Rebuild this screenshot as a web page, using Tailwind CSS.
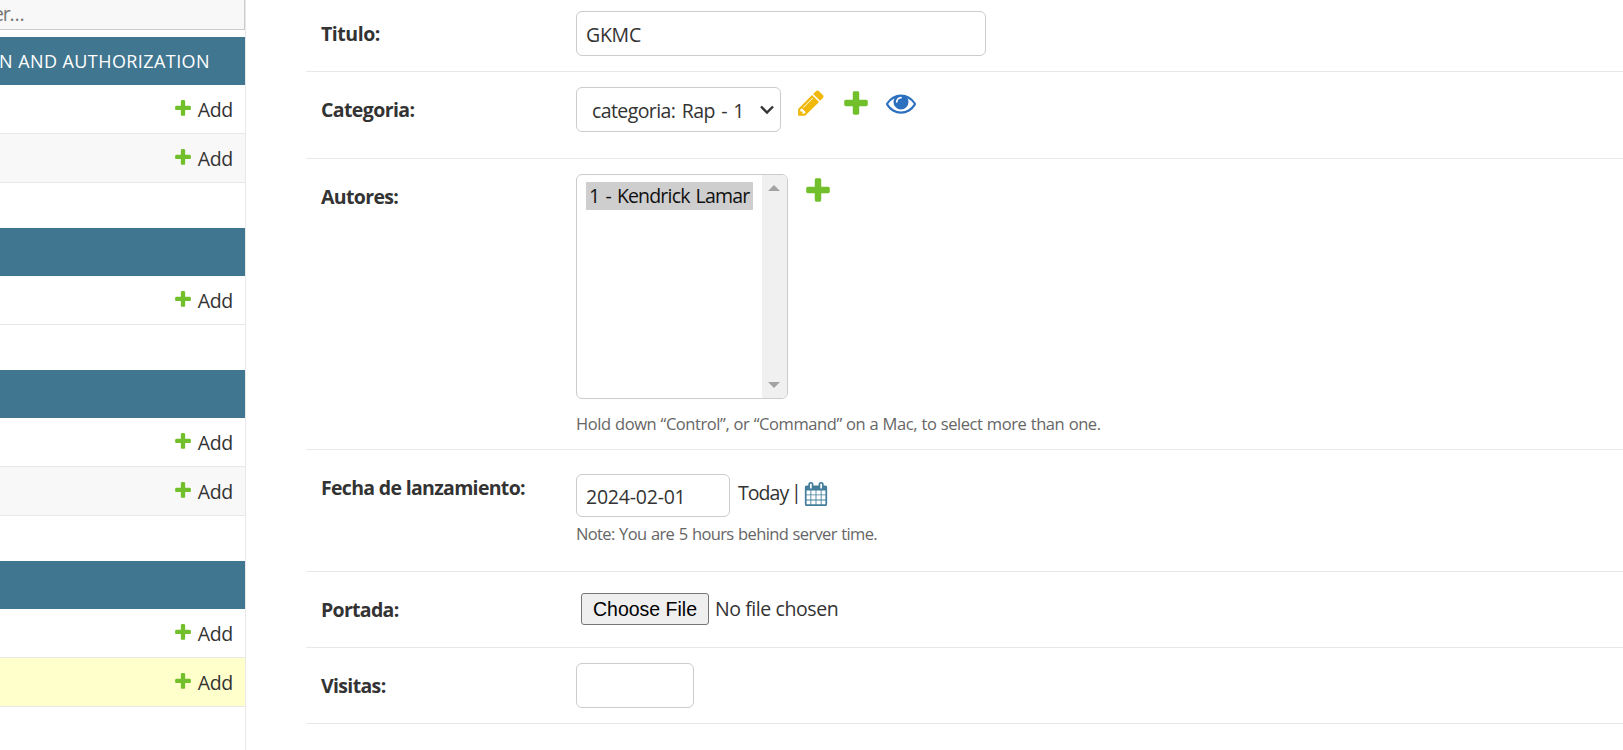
<!DOCTYPE html>
<html lang="es">
<head>
<meta charset="utf-8">
<title>Disco</title>
<script src="https://cdn.jsdelivr.net/npm/@tailwindcss/browser@4"></script>
</head>
<body class="h-[750px] overflow-hidden bg-white font-['Open_Sans',sans-serif] text-[19.5px] leading-[30px] text-[#333]">
<svg class="hidden">
  <symbol id="plus" viewBox="0 0 1792 1792"><path fill="#70bf2b" d="M1600 796v192q0 40-28 68t-68 28h-416v416q0 40-28 68t-68 28h-192q-40 0-68-28t-28-68v-416h-416q-40 0-68-28t-28-68v-192q0-40 28-68t68-28h416v-416q0-40 28-68t68-28h192q40 0 68 28t28 68v416h416q40 0 68 28t28 68z"/></symbol>
  <symbol id="pencil" viewBox="0 0 1792 1792"><path fill="#efb80b" d="M491 1536l91-91-235-235-91 91v107h128v128h107zm523-928q0-22-22-22-10 0-17 7l-542 542q-7 7-7 17 0 22 22 22 10 0 17-7l542-542q7-7 7-17zm-54-192l416 416-832 832h-416v-416zm683 96q0 53-37 90l-166 166-416-416 166-165q36-38 90-38 53 0 91 38l235 234q37 39 37 91z"/></symbol>
  <symbol id="eye" viewBox="0 0 1792 1792"><path fill="#2b70bf" d="M1664 960q-152-236-381-353 61 104 61 225 0 185-131.5 316.5t-316.5 131.5-316.5-131.5-131.5-316.5q0-121 61-225-229 117-381 353 133 205 333.5 326.5t434.5 121.5 434.5-121.5 333.5-326.5zm-720-384q0-20-14-34t-34-14q-125 0-214.5 89.5t-89.5 214.5q0 20 14 34t34 14 34-14 14-34q0-86 61-147t147-61q20 0 34-14t14-34zm848 384q0 34-20 69-140 230-376.5 368.5t-499.5 138.5-499.5-139-376.5-368q-20-35-20-69t20-69q140-229 376.5-368t499.5-139 499.5 139 376.5 368q20 35 20 69z"/></symbol>
  <symbol id="calendar" viewBox="0 0 1792 1792"><path fill="#447e9b" d="M192 1664h288v-288h-288v288zm352 0h320v-288h-320v288zm-352-352h288v-320h-288v320zm352 0h320v-320h-320v320zm-352-384h288v-288h-288v288zm736 736h320v-288h-320v288zm-384-736h320v-288h-320v288zm768 736h288v-288h-288v288zm-384-352h320v-320h-320v320zm-352-864v-288q0-13-9.5-22.5t-22.5-9.5h-64q-13 0-22.5 9.5t-9.5 22.5v288q0 13 9.5 22.5t22.5 9.5h64q13 0 22.5-9.5t9.5-22.5zm736 864h288v-320h-288v320zm-384-384h320v-288h-320v288zm384 0h288v-288h-288v288zm32-480v-288q0-13-9.5-22.5t-22.5-9.5h-64q-13 0-22.5 9.5t-9.5 22.5v288q0 13 9.5 22.5t22.5 9.5h64q13 0 22.5-9.5t9.5-22.5zm384-64v1280q0 52-38 90t-90 38h-1408q-52 0-90-38t-38-90v-1280q0-52 38-90t90-38h128v-96q0-66 47-113t113-47h64q66 0 113 47t47 113v96h384v-96q0-66 47-113t113-47h64q66 0 113 47t47 113v96h128q52 0 90 38t38 90z"/></symbol>
</svg>
<div class="flex h-full">
  <nav class="flex w-[246px] shrink-0 flex-col border-r border-[#e8e8e8]">
    <div class="h-[30px] overflow-hidden border-r border-b border-[#ccc] bg-[#f8f8f8] text-[#757575]"><div class="-ml-[7px] -mt-px tracking-[-1.2px]">er…</div></div>
    <div class="mt-[7px] flex h-12 items-center justify-end overflow-hidden whitespace-nowrap bg-[#417690] pr-[35px] text-[18px] tracking-[0.42px] text-white">AUTHENTICATION AND AUTHORIZATION</div>
    <div class="flex h-[49px] justify-end border-b border-[#e8e8e8] pr-[12px] pt-[10px]"><svg class="mr-[5px] mt-[3px] size-5"><use href="#plus"/></svg><a class="tracking-[-0.3px]">Add</a></div>
    <div class="flex h-[49px] justify-end border-b border-[#e8e8e8] bg-[#f8f8f8] pr-[12px] pt-[10px]"><svg class="mr-[5px] mt-[3px] size-5"><use href="#plus"/></svg><a class="tracking-[-0.3px]">Add</a></div>
    <div class="mt-[45px] h-12 bg-[#417690]"></div>
    <div class="flex h-[49px] justify-end border-b border-[#e8e8e8] pr-[12px] pt-[10px]"><svg class="mr-[5px] mt-[3px] size-5"><use href="#plus"/></svg><a class="tracking-[-0.3px]">Add</a></div>
    <div class="mt-[45px] h-12 bg-[#417690]"></div>
    <div class="flex h-[49px] justify-end border-b border-[#e8e8e8] pr-[12px] pt-[10px]"><svg class="mr-[5px] mt-[3px] size-5"><use href="#plus"/></svg><a class="tracking-[-0.3px]">Add</a></div>
    <div class="flex h-[49px] justify-end border-b border-[#e8e8e8] bg-[#f8f8f8] pr-[12px] pt-[10px]"><svg class="mr-[5px] mt-[3px] size-5"><use href="#plus"/></svg><a class="tracking-[-0.3px]">Add</a></div>
    <div class="mt-[45px] h-12 bg-[#417690]"></div>
    <div class="flex h-[49px] justify-end border-b border-[#e8e8e8] pr-[12px] pt-[10px]"><svg class="mr-[5px] mt-[3px] size-5"><use href="#plus"/></svg><a class="tracking-[-0.3px]">Add</a></div>
    <div class="flex h-[49px] justify-end border-b border-[#e8e8e8] bg-[#ffffcc] pr-[12px] pt-[10px]"><svg class="mr-[5px] mt-[3px] size-5"><use href="#plus"/></svg><a class="tracking-[-0.3px]">Add</a></div>
  </nav>
  <main class="ml-[60px] flex-1">
    <div class="flex h-[72px] border-b border-[#e8e8e8] pl-[15px]">
      <label class="w-[255px] pt-[19px] font-bold tracking-[-0.45px]">Titulo:</label>
      <div class="mt-[11px] h-[45px] w-[410px] rounded-md border border-[#ccc] pl-[9px] pt-[8px] tracking-[-0.25px]">GKMC</div>
    </div>
    <div class="flex h-[87px] border-b border-[#e8e8e8] pl-[15px]">
      <label class="w-[255px] pt-[23px] font-bold tracking-[-0.6px]">Categoria:</label>
      <div class="mt-[15px] flex h-[45px] w-[205px] rounded-md border border-[#ccc] pl-[15px] pt-[8px]">
        <span class="w-[168px] whitespace-nowrap tracking-[-0.6px] [word-spacing:2px]">categoria: Rap - 1</span>
        <svg class="mt-[9px] h-[10px] w-[14px] shrink-0" viewBox="0 0 14 10"><path d="M1 1.5l6 6 6-6" fill="none" stroke="#333" stroke-width="2.4"/></svg>
      </div>
      <div class="flex gap-[15px] pl-[15px] pt-4">
        <svg class="size-[30px]"><use href="#pencil"/></svg><svg class="size-[30px]"><use href="#plus"/></svg><svg class="size-[30px]"><use href="#eye"/></svg>
      </div>
    </div>
    <div class="flex h-[291px] border-b border-[#e8e8e8] pl-[15px]">
      <label class="w-[255px] pt-[23px] font-bold tracking-[-0.65px]">Autores:</label>
      <div class="pt-[15px]">
        <div class="flex">
          <div class="flex h-[225px] w-[212px] justify-between overflow-hidden rounded-md border border-[#ccc] pl-[9px]">
            <div class="mt-[7px] h-7 w-[167px] whitespace-nowrap bg-[#cecece] pl-[3px] leading-[28px] tracking-[-0.82px] text-[#101010] [word-spacing:1.8px]">1 - Kendrick Lamar</div>
            <div class="flex w-[25px] flex-col items-center justify-between bg-[#f0f0f0] pb-[10px] pt-[10px] pr-px">
              <svg class="h-[6px] w-[12px]" viewBox="0 0 12 6"><path d="M0 6l6-6 6 6z" fill="#a3a3a3"/></svg>
              <svg class="h-[6px] w-[12px]" viewBox="0 0 12 6"><path d="M0 0l6 6 6-6z" fill="#a3a3a3"/></svg>
            </div>
          </div>
          <svg class="ml-[15px] mt-px size-[30px]"><use href="#plus"/></svg>
        </div>
        <div class="mt-[10px] whitespace-nowrap text-[16.5px] tracking-[-0.42px] text-[#666] [word-spacing:0.45px]">Hold down “Control”, or “Command” on a Mac, to select more than one.</div>
      </div>
    </div>
    <div class="flex h-[122px] border-b border-[#e8e8e8] pl-[15px]">
      <label class="w-[255px] whitespace-nowrap pt-[23px] font-bold tracking-[-0.68px]">Fecha de lanzamiento:</label>
      <div class="pt-6">
        <div class="flex">
          <div class="h-[43px] w-[154px] rounded-md border border-[#ccc] pl-[9px] pt-[7px] tracking-[-0.22px]">2024-02-01</div>
          <div class="ml-2 mt-1 flex"><span class="w-[53px] tracking-[-0.95px]">Today</span><span class="-mt-px w-[13px]">|</span><svg class="mt-1 size-6"><use href="#calendar"/></svg></div>
        </div>
        <div class="mt-[2px] whitespace-nowrap text-[16.5px] tracking-[-0.65px] text-[#666] [word-spacing:0.9px]">Note: You are 5 hours behind server time.</div>
      </div>
    </div>
    <div class="flex h-[76px] border-b border-[#e8e8e8] pl-[15px]">
      <label class="w-[260px] pt-[23px] font-bold tracking-[-0.7px]">Portada:</label>
      <button class="mt-[21px] h-8 w-32 rounded-[3px] border border-[#767676] bg-[#efefef] font-['Liberation_Sans',sans-serif] text-[19.5px] leading-[30px] text-black">Choose File</button>
      <span class="ml-[6px] mt-[22px] tracking-[-0.42px]">No file chosen</span>
    </div>
    <div class="flex h-[76px] border-b border-[#e8e8e8] pl-[15px]">
      <label class="w-[255px] pt-[23px] font-bold tracking-[-0.65px]">Visitas:</label>
      <div class="mt-[15px] h-[45px] w-[118px] rounded-md border border-[#ccc]"></div>
    </div>
  </main>
</div>
</body>
</html>
